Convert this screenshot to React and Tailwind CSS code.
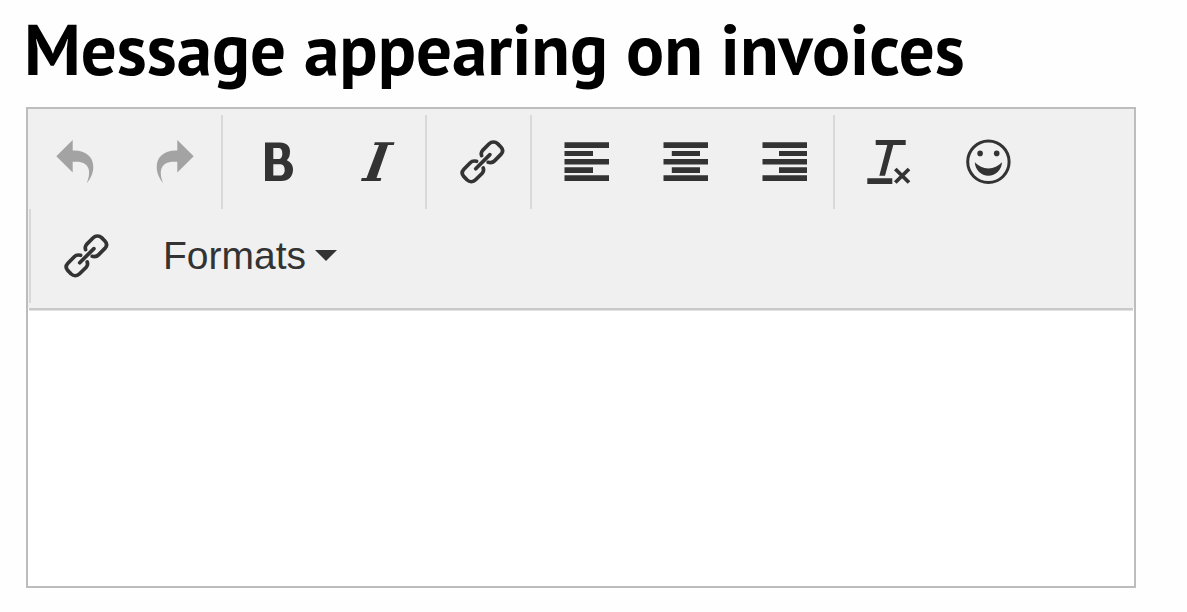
import React from "react";

function Icon({ children }) {
  return (
    <svg viewBox="0 0 48 48" className="size-12 shrink-0" fill="currentColor" aria-hidden="true">
      {children}
    </svg>
  );
}

const ARROW =
  "M3.3 18.3L19.7 2V12.5C33 12 40.3 19 40.3 29C40.3 35 37.5 41 33.7 45.3C38.5 34 37 23.7 23 23.7H19.7V34.5Z";
const RING =
  "M24.6 17.6C23.8 15.4 24.3 13.8 25.6 12.4L32.2 5.8C34.6 3.5 38.2 3.4 40.6 5.6L43.9 9C46.1 11.3 46 14.1 43.9 16.4L37.5 22.9C35.8 24.7 34 25 31.2 24.3";

const icons = {
  undo: <path d={ARROW} />,
  redo: <path d={ARROW} transform="matrix(-1 0 0 1 48 0)" />,
  bold: (
    <path
      fillRule="evenodd"
      d="M12 4.4H27C33.5 4.4 37 8 37 13.4C37 17.5 36 20 33.8 22.3C37.5 24 40 27 40 31.5C40 38.5 35.5 43 28.5 43H12ZM20.3 10V21H25.5C28 21 29.3 18.5 29.3 15.4C29.3 12 28 10 25.5 10ZM20.3 26.2V37.6H27C30 37.6 31.7 35.5 31.7 32C31.7 28.3 30 26.2 27 26.2Z"
    />
  ),
  italic: <path d="M22.8 4.2H42.5L41.8 7H36L24.5 40H29.3L28.6 43H9L9.7 40H14.5L27 7H22.1Z" />,
  link: (
    <g fill="none" stroke="currentColor" strokeWidth="3.7" strokeLinecap="round">
      <path d={RING} />
      <path d={RING} transform="rotate(180 25.4 23.8)" />
      <path d="M18.7 30.8L32.9 16.6" />
    </g>
  ),
  left: <path d="M2.5 4.3H47V10H2.5ZM2.5 13H31V18H2.5ZM2.5 21H47V26.6H2.5ZM2.5 29.3H31V35H2.5ZM2.5 37.3H47V43H2.5Z" />,
  center: <path d="M2.5 4.3H47V10H2.5ZM10.8 13H39V18H10.8ZM2.5 21H47V26.6H2.5ZM10.8 29.3H39V35H10.8ZM2.5 37.3H47V43H2.5Z" />,
  right: <path d="M2.5 4.3H47V10H2.5ZM19 13H47V18H19ZM2.5 21H47V26.6H2.5ZM19 29.3H47V35H19ZM2.5 37.3H47V43H2.5Z" />,
  clear: (
    <>
      <path d="M10.7 2H40.7V7H28.3L20 37.7H14.3L22.3 7H10.7ZM2.3 40.2H27.3V46H2.3Z" />
      <path d="M30.3 31L44 44.5M44 31L30.3 44.5" fill="none" stroke="currentColor" strokeWidth="3.8" />
    </>
  ),
  smile: (
    <>
      <circle cx="24.4" cy="23.8" r="20.7" fill="none" stroke="currentColor" strokeWidth="3" />
      <circle cx="16.1" cy="15.4" r="2.8" />
      <circle cx="32.7" cy="15.4" r="2.8" />
      <path d="M10.8 24.3C14.5 28 19 30.4 24.4 30.4S34.3 28 38 24.3C37.5 32.5 31.5 37.7 24.4 37.7S11.3 32.5 10.8 24.3Z" />
    </>
  ),
};

const groups = [
  [
    ["undo", "Undo"],
    ["redo", "Redo"],
  ],
  [
    ["bold", "Bold"],
    ["italic", "Italic"],
  ],
  [["link", "Insert link"]],
  [
    ["left", "Align left"],
    ["center", "Align center"],
    ["right", "Align right"],
  ],
  [
    ["clear", "Clear formatting"],
    ["smile", "Emoticons"],
  ],
];

function ToolButton({ icon, label, disabled }) {
  return (
    <button
      type="button"
      aria-label={label}
      disabled={disabled}
      className="flex h-full w-24 items-center justify-center disabled:text-[#a3a3a3]"
    >
      <Icon>{icons[icon]}</Icon>
    </button>
  );
}

export default function App() {
  return (
    <main className="min-h-screen bg-[#fefefe] pt-2 pr-[51px] pb-6 pl-[26px] font-['Liberation_Sans',Arial,sans-serif] text-[#333]">
      <h1 className="mb-[17px] -ml-0.5 text-[71px] leading-[82px] font-bold whitespace-nowrap text-black font-['PT_Sans',Lato,sans-serif]">
        <label htmlFor="message">Message appearing on invoices</label>
      </h1>
      <div className="border-2 border-[#bdbdbd] bg-white">
        <div role="toolbar" className="flex flex-wrap bg-[#f0f0f0] px-px pt-1.5 pb-[5px]">
          {groups.map((group, i) => (
            <div
              key={i}
              className={
                i === 0
                  ? "flex h-[94px]"
                  : "flex h-[94px] gap-[3px] border-l-2 border-[#d9d9d9] pr-px pl-1.5"
              }
            >
              {group.map(([icon, label]) => (
                <ToolButton key={icon} icon={icon} label={label} disabled={i === 0} />
              ))}
            </div>
          ))}
          <div className="flex h-[94px] gap-[3px] border-l-2 border-[#d9d9d9] pl-1.5">
            <ToolButton icon="link" label="Link" />
            <button type="button" className="flex items-center gap-[9px] px-[27px] pb-0.5 text-[39px] leading-none">
              Formats
              <svg viewBox="0 0 22 11" className="h-[11px] w-[22px]" fill="currentColor" aria-hidden="true">
                <path d="M0 0H22L11 11Z" />
              </svg>
            </button>
          </div>
        </div>
        <div className="mx-px h-[3px] border-t-2 border-[#c9c9c9] bg-[#e2e2e2]" />
        <textarea id="message" className="block h-[275px] w-full resize-none bg-white p-4 text-4xl outline-none" />
      </div>
    </main>
  );
}
